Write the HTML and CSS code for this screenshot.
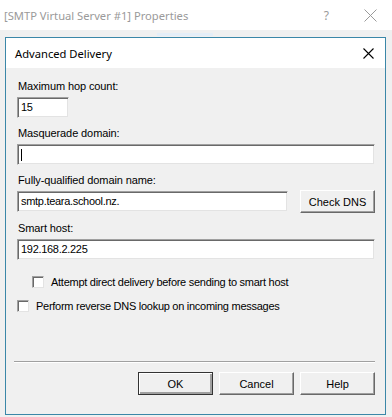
FILE: index.html
```html
<!DOCTYPE html>
<html>
<head>
<meta charset="utf-8">
<link rel="stylesheet" href="styles.css">
</head>
<body>
<div class="outer">
  <div class="outer-title">
    <span class="outer-text">[SMTP Virtual Server #1] Properties</span>
    <span class="outer-help">?</span>
    <svg class="outer-close" width="13" height="13" viewBox="0 0 13 13"><path d="M0.5 0.5L12.5 12.5M12.5 0.5L0.5 12.5" stroke="#9a9a9a" stroke-width="1"/></svg>
  </div>
  <div class="outer-body">
    <div class="tabhint"></div>
    <div class="dialog">
      <div class="dlg-title">
        <span class="dlg-text">Advanced Delivery</span>
        <svg class="dlg-close" width="11" height="11" viewBox="0 0 11 11"><path d="M0.5 0.5L10.5 10.5M10.5 0.5L0.5 10.5" stroke="#000" stroke-width="1.1"/></svg>
      </div>
      <div class="content">
        <div class="group">
          <div class="label">Maximum hop count:</div>
          <div class="input short">15</div>
        </div>
        <div class="group">
          <div class="label">Masquerade domain:</div>
          <div class="input"><span class="caret"></span></div>
        </div>
        <div class="group">
          <div class="label">Fully-qualified domain name:</div>
          <div class="row">
            <div class="input grow">smtp.teara.school.nz.</div>
            <div class="btn dns">Check DNS</div>
          </div>
        </div>
        <div class="group">
          <div class="label">Smart host:</div>
          <div class="input">192.168.2.225</div>
        </div>
        <div class="check indent"><span class="box"></span><span>Attempt direct delivery before sending to smart host</span></div>
        <div class="check second"><span class="box"></span><span>Perform reverse DNS lookup on incoming messages</span></div>
        <div class="sep"></div>
        <div class="buttons">
          <div class="btn default">OK</div>
          <div class="btn">Cancel</div>
          <div class="btn">Help</div>
        </div>
      </div>
    </div>
  </div>
</div>
</body>
</html>
```
FILE: styles.css
```css
html, body {
  margin: 0;
  padding: 0;
}
body {
  width: 392px;
  height: 417px;
  overflow: hidden;
  background: #f0f0f0;
  font-family: "Liberation Sans", Arial, sans-serif;
  font-size: 11px;
  color: #000;
}
.outer {
  width: 392px;
  height: 417px;
  display: flex;
  flex-direction: column;
}
.outer-title {
  height: 30px;
  background: #ffffff;
  display: flex;
  align-items: center;
  flex-shrink: 0;
}
.outer-text {
  margin-left: 4px;
  font-family: "Noto Sans", "Open Sans", sans-serif;
  font-size: 11.2px;
  color: #9a9a9a;
  flex: 1;
}
.outer-help {
  font-family: "Noto Sans", sans-serif;
  font-size: 12px;
  color: #9a9a9a;
  margin-right: 35px;
}
.outer-close {
  margin-right: 15px;
}
.outer-body {
  flex: 1;
  background: #f0f0f0;
  position: relative;
}
.tabhint {
  position: absolute;
  left: 157px;
  top: 3px;
  width: 56px;
  height: 3px;
  background: #e4eef8;
}
.dialog {
  position: relative;
  margin-left: 5px;
  margin-top: 7px;
  width: 379px;
  height: 376px;
  border: 1px solid #3b87a8;
  background: #f0f0f0;
  display: flex;
  flex-direction: column;
}
.dlg-title {
  height: 30px;
  background: #fff;
  display: flex;
  align-items: center;
  flex-shrink: 0;
}
.dlg-text {
  margin-left: 9px;
  flex: 1;
  font-family: "Noto Sans", "Open Sans", sans-serif;
  font-size: 11.2px;
  color: #000;
  padding-top: 1px;
}
.dlg-close {
  margin-right: 11px;
  margin-top: 1px;
}
.content {
  padding: 12px 10px 0 11px;
  display: flex;
  flex-direction: column;
}
.group {
  display: flex;
  flex-direction: column;
  margin-bottom: 9px;
}
.label {
  height: 13px;
  line-height: 13px;
  margin-bottom: 4px;
  padding-left: 1px;
  letter-spacing: -0.1px;
}
.input {
  box-sizing: border-box;
  height: 21px;
  background: #fff;
  border-style: solid;
  border-width: 1px;
  border-color: #a0a0a0 #f0f0f0 #f0f0f0 #a0a0a0;
  box-shadow: inset 1px 1px 0 #696969, inset -1px -1px 0 #e3e3e3;
  padding: 0 0 0 3px;
  line-height: 19px;
  font-size: 11px;
  letter-spacing: -0.3px;
  display: flex;
  align-items: center;
}
.input.short {
  width: 52px;
}
.caret {
  width: 1px;
  height: 12px;
  background: #000;
}
.row {
  display: flex;
  gap: 12px;
}
.input.grow {
  flex: 1;
}
.btn {
  box-sizing: border-box;
  width: 75px;
  height: 23px;
  background: #f0f0f0;
  border-style: solid;
  border-width: 1px;
  border-color: #fff #696969 #696969 #fff;
  box-shadow: inset -1px -1px 0 #a0a0a0;
  display: flex;
  align-items: center;
  justify-content: center;
  font-size: 11px;
}
.btn.dns {
  margin-top: -1px;
}
.btn.default {
  border-color: #333 #333 #333 #333;
  box-shadow: inset 1px 1px 0 #fff, inset -2px -2px 0 #a0a0a0;
}
.check {
  display: flex;
  align-items: center;
  height: 13px;
  font-size: 11px;
  letter-spacing: -0.27px;
}
.check .box {
  box-sizing: border-box;
  width: 12px;
  height: 12px;
  background: #fff;
  border-style: solid;
  border-width: 1px;
  border-color: #a0a0a0 #e3e3e3 #e3e3e3 #a0a0a0;
  box-shadow: inset 1px 1px 0 #696969;
  margin-right: 7px;
}
.check.indent {
  margin-top: 6px;
  padding-left: 15px;
}
.check.second {
  margin-top: 11px;
}
.sep {
  margin-top: 49px;
  margin-left: -3px;
  height: 1px;
  background: #a0a0a0;
  border-bottom: 1px solid #fff;
}
.buttons {
  display: flex;
  justify-content: flex-end;
  gap: 6px;
  margin-top: 9px;
}
```
